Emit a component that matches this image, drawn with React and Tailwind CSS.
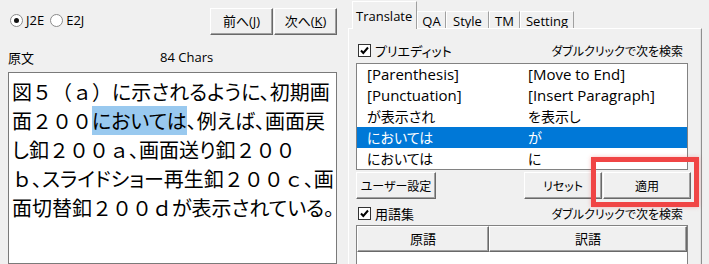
import React from "react";

const UI = "font-['Open_Sans','Noto_Sans_CJK_JP',sans-serif]";
const JP = "font-['Noto_Sans_CJK_JP',sans-serif] [font-feature-settings:'palt']";

const BTN =
  "flex items-center justify-center bg-[#f0f0f0] border border-t-white border-l-white border-r-[#696969] border-b-[#696969] shadow-[inset_-1px_-1px_0_#a0a0a0]";

// full-width digits and letters keep their full em width
function F({ children }) {
  return <span className="[font-feature-settings:normal]">{children}</span>;
}

function Radio({ on, label }) {
  return (
    <div className="flex items-center">
      <span className="w-[13px] h-[13px] rounded-full border border-[#8a8a8a] bg-white flex items-center justify-center">
        {on && <span className="w-[5px] h-[5px] rounded-full bg-[#111]" />}
      </span>
      <span className="ml-[3px] text-[13px] leading-none">{label}</span>
    </div>
  );
}

function Check({ label }) {
  return (
    <div className="flex items-center h-[13px]">
      <span className="w-[13px] h-[13px] ml-[2px] border border-[#333] bg-white flex items-center justify-center">
        <svg width="11" height="11" viewBox="0 0 11 11">
          <path d="M2 5.5 L4.3 8 L9 2.5" fill="none" stroke="#000" strokeWidth="2" />
        </svg>
      </span>
      <span className={`ml-[4px] text-[13px] leading-none ${JP}`}>{label}</span>
    </div>
  );
}

const ROWS = [
  { a: "[Parenthesis]", b: "[Move to End]" },
  { a: "[Punctuation]", b: "[Insert Paragraph]" },
  { a: "が表示され", b: "を表示し", jp: true },
  { a: "においては", b: "が", jp: true, sel: true },
  { a: "においては", b: "に", jp: true },
];

const LINES = [
  <>
    図<F>５（ａ）</F>に示されるように、初期画
  </>,
  <>
    面<F>２００</F>
    <span className="bg-[#99c9ef]">においては</span>、例えば、画面戻
  </>,
  <>
    し釦<F>２００ａ</F>、画面送り釦<F>２００</F>
  </>,
  <>
    <F>ｂ</F>、スライドショー再生釦<F>２００ｃ</F>、画
  </>,
  <>
    面切替釦<F>２００ｄ</F>が表示されている。
  </>,
];

export default function App() {
  return (
    <div className={`relative w-[709px] h-[264px] overflow-hidden bg-[#f0f0f0] text-black flex ${UI}`}>
      {/* left side */}
      <div className="w-[348px] pl-[8px] flex flex-col">
        <div className="h-[27px] mt-[8px] w-[329px] flex items-center">
          <div className="ml-[2px] flex items-center gap-[6px] self-start mt-[6px]">
            <Radio on label="J2E" />
            <Radio label="E2J" />
          </div>
          <div className="ml-auto flex gap-[1px] h-[27px]">
            <div className={`${BTN} w-[63px] text-[13px]`}>
              前へ(<span className="underline">J</span>)
            </div>
            <div className={`${BTN} w-[63px] text-[13px]`}>
              次へ(<span className="underline">K</span>)
            </div>
          </div>
        </div>
        <div className="mt-[15px] h-[14px] flex items-center text-[13px] leading-none">
          <span className={JP}>原文</span>
          <span className="ml-[126px]">84 Chars</span>
        </div>
        <div className="mt-[8px] w-[329px] flex-1 bg-white border border-[#7a7a7a] pl-[3px] pt-[4px] overflow-hidden">
          <div className={`text-[20px] leading-[29px] ${JP}`}>
            {LINES.map((l, i) => (
              <div key={i} className="whitespace-nowrap">
                {l}
              </div>
            ))}
          </div>
        </div>
      </div>

      {/* right side: tab control */}
      <div className="w-[354px] flex flex-col">
        <div className="h-[29px] flex items-end pl-[4px] text-[13px]">
          <div className="relative top-[1px] z-10 h-[28px] w-[65px] bg-[#f0f0f0] border-t border-l border-white border-r border-r-[#a0a0a0] pt-[8px] pl-[3px] leading-none">
            Translate
          </div>
          {[
            ["QA", 29],
            ["Style", 43],
            ["TM", 31],
            ["Setting", 54],
          ].map(([t, w]) => (
            <div
              key={t}
              style={{ width: w }}
              className="h-[17px] pt-[2px] border-t border-l border-white border-r border-r-[#a0a0a0] flex items-center justify-center leading-none"
            >
              {t}
            </div>
          ))}
        </div>
        <div className="flex-1 border-t border-l border-white border-r border-r-[#8f8f8f] shadow-[inset_-1px_0_0_#e3e3e3] pl-[7px]">
          <div className="mt-[15px] w-[332px] flex items-center">
            <Check label="プリエディット" />
            <span className={`ml-auto mr-[5px] text-[12px] leading-none ${JP}`}>ダブルクリックで次を検索</span>
          </div>
          <div className="mt-[6px] w-[332px] h-[107px] bg-white border border-[#828282] overflow-hidden">
            {ROWS.map((r, i) => (
              <div
                key={i}
                className={`h-[21px] flex items-center pl-[10px] ${
                  r.sel ? "bg-[#0078d7] text-white" : ""
                } ${r.jp ? `text-[14px] ${JP}` : "text-[15px]"}`}
              >
                <span className="w-[161px] whitespace-nowrap">{r.a}</span>
                <span className="whitespace-nowrap">{r.b}</span>
              </div>
            ))}
          </div>
          <div className={`mt-[2px] w-[335px] h-[27px] flex gap-[1px] text-[12px] ${JP}`}>
            <div className={`${BTN} w-[80px]`}>ユーザー設定</div>
            <div className={`${BTN} w-[78px] ml-auto`}>リセット</div>
            <div className={`${BTN} w-[88px]`}>適用</div>
          </div>
          <div className="mt-[8px] w-[332px] flex items-center">
            <Check label="用語集" />
            <span className={`ml-auto mr-[5px] text-[12px] leading-none ${JP}`}>ダブルクリックで次を検索</span>
          </div>
          <div className="mt-[5px] w-[332px] h-[60px] bg-white border border-[#828282]">
            <div className={`h-[26px] flex text-[13px] ${JP}`}>
              <div className={`${BTN} w-[132px]`}>原語</div>
              <div className={`${BTN} flex-1`}>訳語</div>
            </div>
          </div>
        </div>
      </div>

      {/* red highlight around apply button */}
      <div className="absolute left-[591px] top-[157px] w-[108px] h-[50px] border-[5px] border-[#f04545] shadow-[0_0_4px_rgba(240,69,69,0.35)]" />
    </div>
  );
}
